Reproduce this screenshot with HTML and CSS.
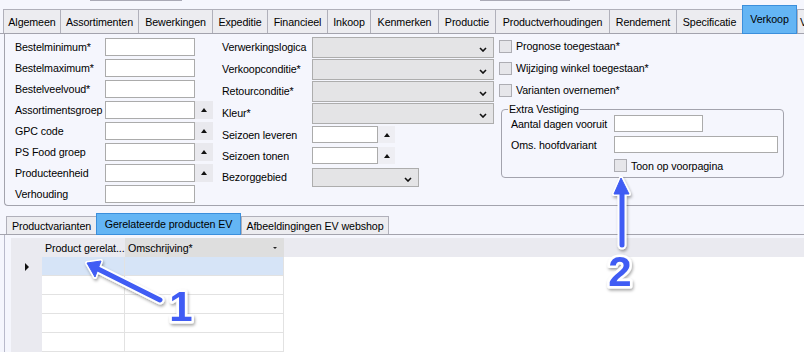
FILE: index.html
```html
<!DOCTYPE html>
<html lang="nl">
  <head>
    <meta charset="UTF-8" />
    <title>Product - Verkoop</title>
    <link rel="stylesheet" href="styles.css" />
  </head>
  <body>
    <div class="window">
      <div class="top-stubs">
        <span class="stub stub-a"></span>
        <span class="stub stub-b"></span>
      </div>

      <nav class="main-tabs">
        <div class="tab">Algemeen</div>
        <div class="tab">Assortimenten</div>
        <div class="tab">Bewerkingen</div>
        <div class="tab">Expeditie</div>
        <div class="tab">Financieel</div>
        <div class="tab">Inkoop</div>
        <div class="tab">Kenmerken</div>
        <div class="tab">Productie</div>
        <div class="tab">Productverhoudingen</div>
        <div class="tab">Rendement</div>
        <div class="tab">Specificatie</div>
        <div class="tab active">Verkoop</div>
        <div class="tab cut">V</div>
      </nav>

      <section class="page">
        <!-- left column -->
        <div class="col col-left">
          <label>Bestelminimum*</label><span class="field"></span><span></span>
          <label>Bestelmaximum*</label><span class="field"></span><span></span>
          <label>Bestelveelvoud*</label><span class="field"></span><span></span>
          <label>Assortimentsgroep</label><span class="field"></span><span class="spin"><i class="up"></i></span>
          <label>GPC code</label><span class="field"></span><span class="spin"><i class="up"></i></span>
          <label>PS Food groep</label><span class="field"></span><span class="spin"><i class="up"></i></span>
          <label>Producteenheid</label><span class="field"></span><span class="spin"><i class="up"></i></span>
          <label>Verhouding</label><span class="field"></span><span></span>
        </div>

        <!-- middle column -->
        <div class="col col-mid">
          <label>Verwerkingslogica</label>
          <span class="combo"><svg width="8" height="5" viewBox="0 0 8 5"><path d="M1 1l3 3 3-3" /></svg></span>
          <label>Verkoopconditie*</label>
          <span class="combo"><svg width="8" height="5" viewBox="0 0 8 5"><path d="M1 1l3 3 3-3" /></svg></span>
          <label>Retourconditie*</label>
          <span class="combo"><svg width="8" height="5" viewBox="0 0 8 5"><path d="M1 1l3 3 3-3" /></svg></span>
          <label>Kleur*</label>
          <span class="combo"><svg width="8" height="5" viewBox="0 0 8 5"><path d="M1 1l3 3 3-3" /></svg></span>
          <label>Seizoen leveren</label>
          <span class="spin-field"><span class="field short"></span><span class="spin light"><i class="up"></i></span></span>
          <label>Seizoen tonen</label>
          <span class="spin-field"><span class="field short"></span><span class="spin light"><i class="up"></i></span></span>
          <label>Bezorggebied</label>
          <span class="combo small"><svg width="8" height="5" viewBox="0 0 8 5"><path d="M1 1l3 3 3-3" /></svg></span>
        </div>

        <!-- right column -->
        <div class="col col-right">
          <div class="check-row"><span class="check"></span>Prognose toegestaan*</div>
          <div class="check-row"><span class="check"></span>Wijziging winkel toegestaan*</div>
          <div class="check-row"><span class="check"></span>Varianten overnemen*</div>

          <fieldset class="group">
            <legend>Extra Vestiging</legend>
            <div class="group-grid">
              <label>Aantal dagen vooruit</label><span class="field days"></span>
              <label>Oms. hoofdvariant</label><span class="field wide"></span>
              <span></span>
              <div class="check-row small"><span class="check"></span>Toon op voorpagina</div>
            </div>
          </fieldset>
        </div>
      </section>

      <nav class="sub-tabs">
        <div class="tab">Productvarianten</div>
        <div class="tab active">Gerelateerde producten EV</div>
        <div class="tab">Afbeeldingingen EV webshop</div>
      </nav>

      <section class="grid-page">
        <div class="grid">
          <div class="gh corner"></div>
          <div class="gh">Product gerelat...</div>
          <div class="gh sorted">Omschrijving*<i class="down"></i></div>
          <div class="gh"></div>

          <div class="rh"><i class="current"></i></div>
          <div class="cell sel"></div><div class="cell sel"></div><div class="fill"></div>
          <div class="rh"></div>
          <div class="cell"></div><div class="cell"></div><div class="fill"></div>
          <div class="rh"></div>
          <div class="cell"></div><div class="cell"></div><div class="fill"></div>
          <div class="rh"></div>
          <div class="cell"></div><div class="cell"></div><div class="fill"></div>
          <div class="rh"></div>
          <div class="cell"></div><div class="cell"></div><div class="fill"></div>
          <div class="rh"></div>
          <div class="cell"></div><div class="cell"></div><div class="fill"></div>
        </div>
      </section>

      <!-- callout arrows drawn over the screenshot -->
      <svg class="annotations" width="804" height="352" viewBox="0 0 804 352">
        <defs>
          <filter id="shade" x="-20%" y="-20%" width="140%" height="140%">
            <feDropShadow dx="1" dy="2" stdDeviation="1.5" flood-color="#000" flood-opacity="0.35" />
          </filter>
        </defs>
        <g filter="url(#shade)">
          <g class="outline">
            <line x1="160" y1="300" x2="96" y2="268" />
            <polygon points="87,263 101,261 95,277" />
            <line x1="622" y1="245" x2="622" y2="192" />
            <polygon points="621,178 629,194 614,194" />
          </g>
          <g class="arrow">
            <line x1="160" y1="300" x2="96" y2="268" />
            <polygon points="87,263 101,261 95,277" />
            <line x1="622" y1="245" x2="622" y2="192" />
            <polygon points="621,178 629,194 614,194" />
          </g>
          <text class="num" x="181" y="321">1</text>
          <text class="num" x="620" y="286">2</text>
        </g>
      </svg>
    </div>
  </body>
</html>
```

FILE: styles.css
```css
* {
  margin: 0;
  padding: 0;
  box-sizing: border-box;
  --bg: #f5f6fd;
  --line: #a3a3ad;
  --tab-bg: #ececf0;
  --tab-active: #64b5f4;
  --tab-active-border: #3b8fdc;
  --field-border: #ababab;
  --grid-gray: #eaeaf0;
  --grid-line: #e2e2e2;
  --callout: #3f5cf4;
}

body {
  width: 804px;
  height: 352px;
  overflow: hidden;
  background: var(--bg);
  font-family: "Liberation Sans", Arial, sans-serif;
  font-size: 10.7px;
  letter-spacing: -0.1px;
  color: #000;
}

.window {
  position: relative;
  height: 100%;
  overflow: hidden;
}

/* cut-off boxes above the tab strip */
.top-stubs {
  display: flex;
  height: 5px;
}

.stub {
  height: 1px;
  background: #a9a9b6;
}

.stub-a {
  margin-left: 90px;
  width: 92px;
}

.stub-b {
  margin-left: 298px;
  width: 90px;
}

/* Tabs */
.main-tabs,
.sub-tabs {
  display: grid;
  align-items: end;
  border-bottom: 1px solid var(--line);
}

.main-tabs {
  grid-template-columns: 57px 78px 74px 55px 60px 43px 68px 57px 114px 67px 66px 55px 7px;
  height: 29px;
  padding-left: 3px;
}

.tab {
  display: flex;
  align-items: center;
  justify-content: center;
  white-space: nowrap;
  overflow: hidden;
  background: var(--tab-bg);
  border-top: 1px solid #b0b0ba;
  border-left: 1px solid #b0b0ba;
}

.main-tabs .tab {
  height: 24px;
}

.main-tabs .tab.cut {
  justify-content: flex-start;
  padding-left: 2px;
}

.sub-tabs .tab:last-child {
  border-right: 1px solid #b0b0ba;
}

.tab.active {
  position: relative;
  z-index: 1;
  background: var(--tab-active);
  border: 1px solid var(--tab-active-border);
  margin-bottom: -1px;
}

.main-tabs .tab.active {
  height: 29px;
  padding-bottom: 2px;
}

.sub-tabs {
  grid-template-columns: 90px 145px 148px;
  height: 28px;
  margin-top: 1px;
  padding-left: 6px;
}

.sub-tabs .tab {
  height: 18px;
}

.sub-tabs .tab.active {
  height: 22px;
  padding-bottom: 1px;
}

/* Verkoop page */
.page {
  display: flex;
  height: 172px;
  margin-left: 4px;
  padding: 2px 0 0 10px;
  border-left: 1px solid var(--line);
  border-bottom: 1px solid var(--line);
  border-bottom-left-radius: 4px;
}

.col label {
  white-space: nowrap;
}

.col-left {
  display: grid;
  grid-template-columns: 90px 90px 18px;
  grid-auto-rows: 21px;
  align-items: center;
  align-content: start;
}

.col-mid {
  display: grid;
  grid-template-columns: 90px 182px;
  grid-template-rows: 22px 22px 22px 22px 21px 21px 22px;
  align-items: center;
  align-content: start;
  margin-left: 9px;
}

.col-right {
  width: 285px;
  margin-left: 5px;
  margin-top: -1px;
}

.field {
  display: block;
  height: 18px;
  background: #fff;
  border: 1px solid var(--field-border);
}

.field.short {
  width: 66px;
  height: 17px;
}

.spin {
  display: flex;
  align-items: center;
  justify-content: center;
  height: 18px;
  background: #e9e9ee;
}

.spin.light {
  width: 17px;
  height: 17px;
  background: #eeeef3;
}

.up {
  width: 0;
  height: 0;
  border-left: 3px solid transparent;
  border-right: 3px solid transparent;
  border-bottom: 4px solid #111;
}

.spin-field {
  display: flex;
}

.combo {
  display: flex;
  align-items: center;
  justify-content: flex-end;
  align-self: start;
  height: 21px;
  margin-top: 1px;
  padding: 4px 6px 0 0;
  background: #e4e4e6;
  border: 1px solid #adadad;
}

.combo.small {
  width: 107px;
  height: 19px;
  align-self: center;
  margin-top: 0;
}

.combo svg path {
  fill: none;
  stroke: #111;
  stroke-width: 1.6;
}

.check-row {
  display: flex;
  align-items: center;
  gap: 4px;
  height: 22px;
  white-space: nowrap;
}

.check {
  width: 13px;
  height: 13px;
  background: #e6e6ea;
  border: 1px solid #adadb3;
}

.group {
  width: 283px;
  margin: 3px 0 0 2px;
  padding: 0 0 1px 9px;
  border: 1px solid var(--line);
  border-radius: 4px;
}

.group legend {
  margin-left: -3px;
  padding: 0 1px;
  line-height: 11px;
}

.group-grid {
  display: grid;
  grid-template-columns: 103px auto;
  grid-auto-rows: 21px;
  align-items: center;
  margin-top: -2px;
}

.field.days {
  width: 89px;
  height: 17px;
}

.field.wide {
  width: 164px;
  height: 17px;
}

.check-row.small {
  height: 21px;
}

/* related products grid */
.grid-page {
  height: 120px;
  overflow: hidden;
  margin-left: 4px;
  padding: 3px 0 0 6px;
  border-left: 1px solid #b9bacb;
}

.grid {
  display: grid;
  grid-template-columns: 31px 83px 159px 1fr;
  grid-auto-rows: 19px;
}

.gh {
  display: flex;
  align-items: center;
  padding-left: 3px;
  background: var(--grid-gray);
  white-space: nowrap;
  overflow: hidden;
}

.gh.sorted {
  justify-content: space-between;
  padding-right: 7px;
  background: #dedede;
}

.down {
  width: 0;
  height: 0;
  border-left: 2px solid transparent;
  border-right: 2px solid transparent;
  border-top: 2px solid #222;
}

.rh {
  display: flex;
  align-items: center;
  justify-content: center;
  background: var(--grid-gray);
}

.current {
  width: 0;
  height: 0;
  border-top: 4px solid transparent;
  border-bottom: 4px solid transparent;
  border-left: 4px solid #111;
}

.cell {
  background: #fff;
  border-right: 1px solid var(--grid-line);
  border-bottom: 1px solid var(--grid-line);
}

.cell.sel {
  background: #d6e4f7;
}

.fill {
  background: #fff;
}

/* callouts */
.annotations {
  position: absolute;
  top: 0;
  left: 0;
  pointer-events: none;
}

.outline line {
  stroke: #fff;
  stroke-width: 9;
  stroke-linecap: round;
}

.outline polygon {
  fill: #fff;
  stroke: #fff;
  stroke-width: 4;
  stroke-linejoin: round;
}

.arrow line {
  stroke: var(--callout);
  stroke-width: 5;
  stroke-linecap: round;
}

.arrow polygon {
  fill: var(--callout);
  stroke: var(--callout);
  stroke-width: 1;
  stroke-linejoin: round;
}

.num {
  font-family: "Liberation Sans", Arial, sans-serif;
  font-weight: bold;
  font-size: 42px;
  text-anchor: middle;
  fill: var(--callout);
  stroke: #fff;
  stroke-width: 5px;
  stroke-linejoin: round;
  paint-order: stroke;
}
```
